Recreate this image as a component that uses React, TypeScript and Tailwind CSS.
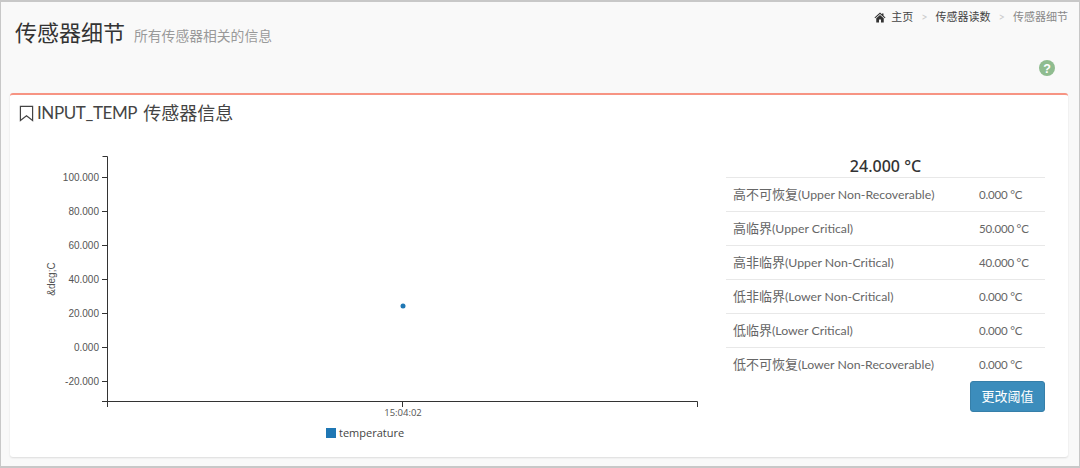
const sans = "font-['Lato','Noto_Sans_CJK_SC',sans-serif]";

const rows = [
  ["高不可恢复", "(Upper Non-Recoverable)", "0.000 °C"],
  ["高临界", "(Upper Critical)", "50.000 °C"],
  ["高非临界", "(Upper Non-Critical)", "40.000 °C"],
  ["低非临界", "(Lower Non-Critical)", "0.000 °C"],
  ["低临界", "(Lower Critical)", "0.000 °C"],
  ["低不可恢复", "(Lower Non-Recoverable)", "0.000 °C"],
];

const ticks = [
  [177, "100.000"],
  [211, "80.000"],
  [245, "60.000"],
  [279, "40.000"],
  [313, "20.000"],
  [347, "0.000"],
  [381, "-20.000"],
] as const;

function Chart() {
  const f = "'Liberation Sans', Arial, sans-serif";
  return (
    <svg width="700" height="310" viewBox="10 135 700 310" className="block">
      <g stroke="#333" strokeWidth="1" fill="none">
        <path d="M107.5 156.5H102.500M107.5 156.5V407" />
        <path d="M102 401.500H697.5V407" />
        <path d="M402.5 402V407" />
        {ticks.map(([y]) => (
          <path key={y} d={`M102 ${y + 0.5}H107.5`} />
        ))}
      </g>
      {ticks.map(([y, t]) => (
        <text key={y} x="99" y={y + 4} textAnchor="end" fontSize="10" fill="#555" fontFamily={f}>
          {t}
        </text>
      ))}
      <text
        transform="translate(55 279) rotate(-90)"
        textAnchor="middle"
        fontSize="10"
        fill="#555"
        fontFamily={f}
      >
        &amp;deg;C
      </text>
      <text x="403" y="416" textAnchor="middle" fontSize="9.500" fill="#555" fontFamily="'Open Sans', sans-serif">
        15:04:02
      </text>
      <circle cx="403" cy="306" r="2.5" fill="#1f77b4" />
      <rect x="326" y="428" width="10" height="10" fill="#1f77b4" />
      <text x="339" y="437" fontSize="11" fill="#444" fontFamily="'Open Sans', sans-serif">
        temperature
      </text>
    </svg>
  );
}

export default function App() {
  return (
    <div className={`${sans} relative h-[468px] w-[1080px] overflow-hidden border-l border-t-2 border-b-2 border-r border-[#c8c8c8] bg-[#f9f9f9]`}>
      <div className="flex h-[91px] items-start justify-between pl-[14px] pr-[11px]">
        <div className="flex items-baseline gap-[9px] pt-[15px]">
          <h1 className="text-[22px] leading-[32px] font-normal text-[#333]">传感器细节</h1>
          <span className="text-[13.8px] leading-[20px] text-[#999]">所有传感器相关的信息</span>
        </div>
        <div className="flex flex-col items-end">
          <div className="flex items-center pt-[7px] text-[11px] leading-[16px] text-[#444]">
            <svg width="12" height="11" viewBox="0 0 24 22" className="mr-[5px]">
              <path d="M12 1 1 11l1.4 1.5L12 4l9.6 8.5L23 11l-4-3.6V3h-3v1.7z" fill="#333" />
              <path d="M12 6 4.5 12.6V21H10v-6h4v6h5.500v-8.400z" fill="#333" />
            </svg>
            <span>主页</span>
            <span className="mx-[8px] text-[#ccc]">&gt;</span>
            <span>传感器读数</span>
            <span className="mx-[8px] text-[#ccc]">&gt;</span>
            <span className="text-[#888]">传感器细节</span>
          </div>
          <svg width="16" height="16" viewBox="0 0 16 16" className="mt-[35px] mr-[13px]">
            <circle cx="8" cy="8" r="8" fill="#8fbc8f" />
            <text x="8" y="12.500" textAnchor="middle" fontSize="12.500" fontWeight="700" fill="#fff" fontFamily="'Liberation Sans', sans-serif">
              ?
            </text>
          </svg>
        </div>
      </div>

      <div className="ml-[9px] h-[364px] w-[1058px] rounded-[3px] border-t-2 border-[#f79483] bg-white shadow-[0_1px_2px_rgba(0,0,0,0.12)]">
        <div className="flex items-center pl-[9px] pt-[6px] text-[18px] leading-[24px] text-[#444]">
          <svg width="15" height="17" viewBox="0 0 16 18" className="mr-[3px]" fill="none" stroke="#444" strokeWidth="1.300">
            <path d="M1.500 1.500h13v15L8 11.500 1.500 16.500z" />
          </svg>
          <span className="text-[17px] tracking-[-0.4px]">INPUT_TEMP</span>
          <span className="ml-[6px]">传感器信息</span>
        </div>
        <div className="flex">
          <div className="mt-[10px] w-[716px]">
            <Chart />
          </div>
          <div className="mt-[30px] w-[319px]">
            <div className="h-[22px] text-center font-['Noto_Sans','Noto_Sans_CJK_SC',sans-serif] text-[16px] leading-[22px] font-medium text-[#333]">24.000 °C</div>
            {rows.map(([zh, en, value]) => (
              <div key={zh} className="flex h-[34px] items-center border-t border-[#e8e8e8] pl-[7px] text-[12.3px] text-[#666]">
                <span className="w-[246px] whitespace-nowrap">
                  <span className="text-[13px]">{zh}</span>
                  {en}
                </span>
                <span className="text-[11.5px] tracking-[-0.2px]">{value}</span>
              </div>
            ))}
            <div className="flex justify-end">
              <button className="h-[31px] w-[75px] rounded-[3px] border border-[#367fa9] bg-[#3c8dbc] text-[13px] text-white">
                更改阈值
              </button>
            </div>
          </div>
        </div>
      </div>
    </div>
  );
}
